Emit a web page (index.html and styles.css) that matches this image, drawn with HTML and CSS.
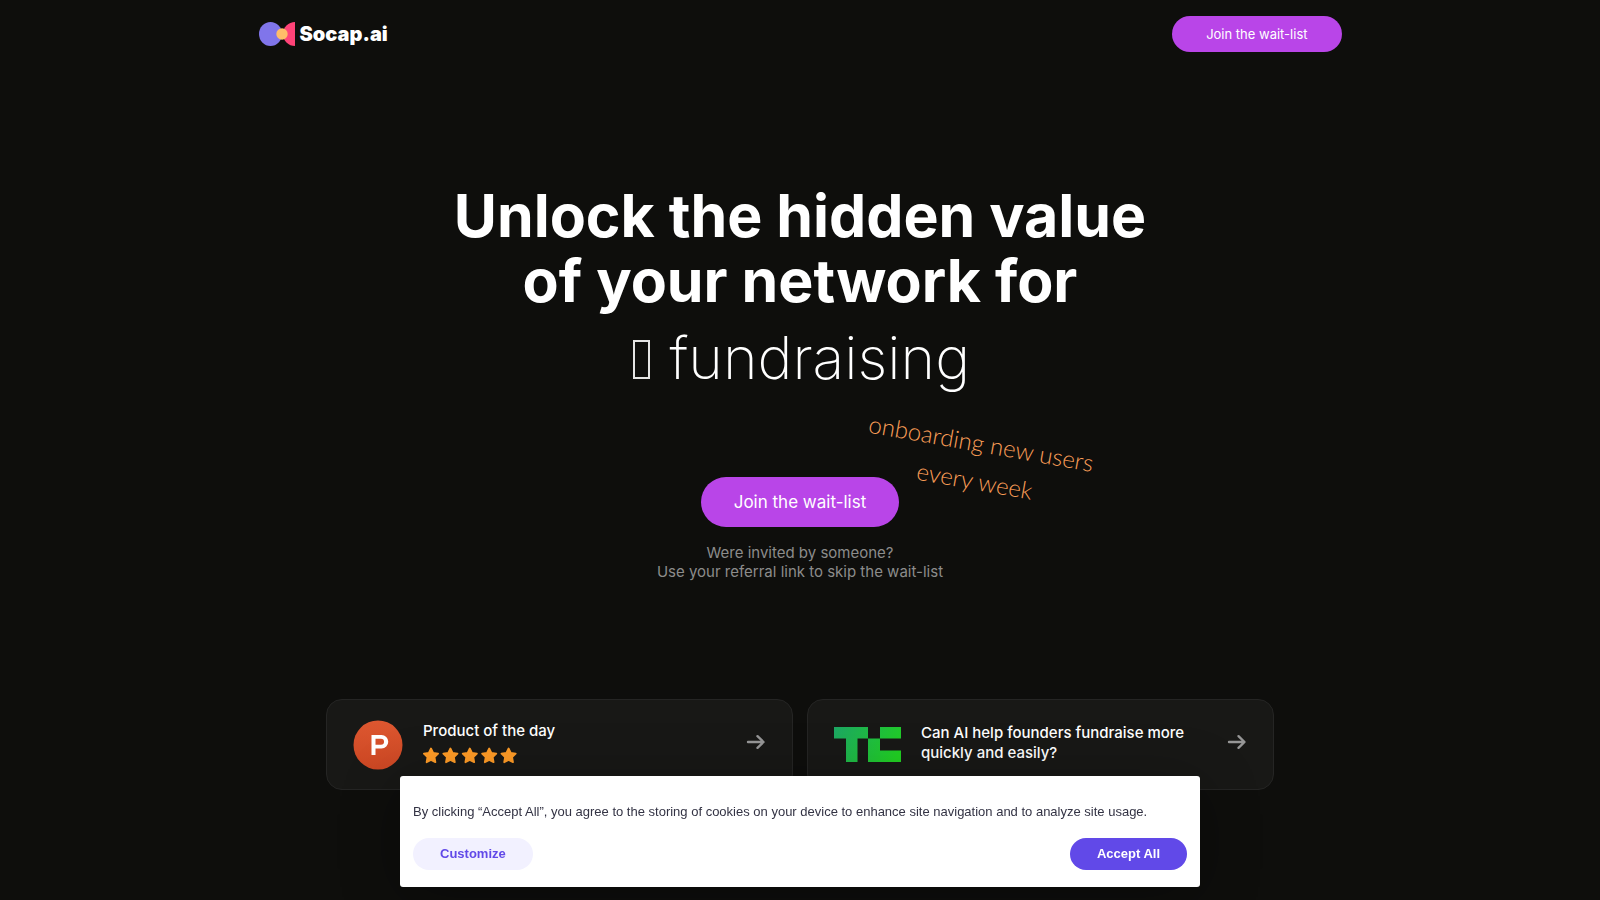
FILE: index.html
```html
<!DOCTYPE html>
<html lang="en">
<head>
<meta charset="utf-8">
<title>Socap.ai</title>
<link rel="stylesheet" href="styles.css">
</head>
<body>
<header class="nav">
  <a class="brand" href="#">
    <svg class="brand-mark" viewBox="0 0 36 24" aria-hidden="true">
      <ellipse cx="11.5" cy="12" rx="11.5" ry="12" fill="#8075ea"/>
      <path d="M36 0A12 12 0 0 0 36 24Z" fill="#ff4378"/>
      <circle cx="23" cy="12" r="5.7" fill="#ffbd69"/>
    </svg>
    <span>Socap.ai</span>
  </a>
  <a class="btn btn-small" href="#">Join the wait-list</a>
</header>
<main>
  <section class="hero">
    <h1 class="title">Unlock the hidden value<br>of your network for</h1>
    <p class="rotator"><span class="missing-glyph"></span> fundraising</p>
    <div class="action">
      <a class="btn btn-large" href="#">Join the wait-list</a>
      <p class="scribble">onboarding new users<br>every week</p>
    </div>
    <p class="hint">Were invited by someone?<br>Use your referral link to skip the wait-list</p>
  </section>
  <section class="cards">
    <a class="card" href="#">
      <svg class="ph-logo" viewBox="0 0 50 50" aria-hidden="true">
        <defs><linearGradient id="ph" x1="0" y1="0" x2="0" y2="1"><stop offset="0" stop-color="#dd5730"/><stop offset="1" stop-color="#cc4723"/></linearGradient></defs>
        <circle cx="25" cy="25" r="24.5" fill="url(#ph)"/>
        <path fill="#fff" fill-rule="evenodd" d="M18.500 15H28.500A6.600 6.600 0 0 1 28.500 28.500H22.500V35H18.500ZM22.500 18.700V24.800H28A3.050 3.050 0 0 0 28 18.700Z"/>
      </svg>
      <span class="card-body">
        <span>Product of the day</span>
        <svg class="stars" viewBox="0 0 96 18" aria-hidden="true">
          <defs><path id="star" d="M8 1.500L10.200 6L15.100 6.700L11.500 10.200L12.400 15.200L8 12.900L3.600 15.200L4.500 10.200L0.900 6.700L5.800 6Z" fill="#ff9c27" stroke="#ff9c27" stroke-width="1.800" stroke-linejoin="round"/></defs>
          <use href="#star"/><use href="#star" x="19.400"/><use href="#star" x="38.800"/><use href="#star" x="58.200"/><use href="#star" x="77.600"/>
        </svg>
      </span>
      <svg class="arrow" viewBox="0 0 20 16" aria-hidden="true"><path d="M2 8H17M11.500 2.200L17.500 8L11.500 13.800"/></svg>
    </a>
    <a class="card" href="#">
      <svg class="tc-logo" viewBox="0 0 67 35" aria-hidden="true">
        <defs><linearGradient id="tc" gradientUnits="userSpaceOnUse" x1="0" y1="0" x2="60" y2="35"><stop offset="0" stop-color="#1da764"/><stop offset="1" stop-color="#21d022"/></linearGradient></defs>
        <path fill="url(#tc)" d="M0 0H34V11.500H23.500V35H12V11.500H0ZM46 0H67V11.500H46ZM34 11.500H46V23.500H67V35H34Z"/>
      </svg>
      <span class="card-body">Can AI help founders fundraise more quickly and easily?</span>
      <svg class="arrow" viewBox="0 0 20 16" aria-hidden="true"><path d="M2 8H17M11.500 2.200L17.500 8L11.500 13.800"/></svg>
    </a>
  </section>
</main>
<aside class="cookies" aria-label="Cookie consent">
  <p class="cookies-text">By clicking “Accept All”, you agree to the storing of cookies on your device to enhance site navigation and to analyze site usage.</p>
  <div class="cookies-actions">
    <button class="pill pill-light" type="button">Customize</button>
    <button class="pill pill-solid" type="button">Accept All</button>
  </div>
</aside>
</body>
</html>
```
FILE: styles.css
```css
* { box-sizing: border-box; }
body {
  margin: 0;
  min-height: 100vh;
  overflow: hidden;
  background: #0e0e0c;
  color: #fff;
  font-family: Inter, "Liberation Sans", sans-serif;
}
p, h1 { margin: 0; }
a { color: inherit; text-decoration: none; }
.nav {
  display: flex;
  justify-content: space-between;
  align-items: center;
  max-width: 1083px;
  margin: 0 auto;
  padding: 16px 0;
}
.brand {
  display: flex;
  align-items: center;
  gap: 5px;
  font-size: 20px;
  font-weight: 900;
  line-height: 24px;
}
.brand-mark { width: 36px; height: 24px; }
.btn {
  display: inline-block;
  background: #b945e8;
  color: #fff;
  border-radius: 25px;
}
.btn-small { padding: 0 34px; font-size: 13px; line-height: 36px; }
.btn-large { padding: 0 33px; font-size: 17px; line-height: 50px; }
.hero {
  display: flex;
  flex-direction: column;
  align-items: center;
  padding-top: 115px;
  text-align: center;
}
.title { font-size: 59px; font-weight: 700; line-height: 65px; }
.rotator { margin-top: 9px; font-size: 59px; font-weight: 200; line-height: 72px; }
.missing-glyph {
  display: inline-block;
  width: 17px;
  height: 39px;
  margin: 0 3px;
  border: 2px solid #e4e4e4;
}
.action { position: relative; margin-top: 83px; }
.scribble {
  position: absolute;
  left: 162px;
  top: -53px;
  width: 230px;
  transform: rotate(10deg);
  color: #f99d57;
  font-family: Lato, sans-serif;
  font-size: 24px;
  font-weight: 300;
  line-height: 38px;
  white-space: nowrap;
}
.hint { margin-top: 16px; color: #8c8c8b; font-size: 15px; line-height: 19px; }
.cards {
  display: grid;
  grid-template-columns: 1fr 1fr;
  gap: 14px;
  max-width: 948px;
  margin: 118px auto 0;
}
.card {
  display: flex;
  align-items: center;
  gap: 20px;
  min-height: 91px;
  padding: 0 26px;
  border: 1px solid #252524;
  border-radius: 16px;
  background: #181816;
  font-size: 15px;
  font-weight: 500;
  line-height: 20px;
}
.ph-logo { flex: none; width: 50px; height: 50px; }
.tc-logo { flex: none; width: 67px; height: 35px; }
.card-body { display: flex; flex: 1; flex-direction: column; gap: 6px; padding-bottom: 3px; }
.stars { width: 96px; height: 18px; }
.arrow {
  flex: none;
  width: 20px;
  height: 16px;
  margin-bottom: 5px;
  fill: none;
  stroke: #969696;
  stroke-width: 2.4;
  stroke-linecap: round;
  stroke-linejoin: round;
}
.cookies {
  position: fixed;
  left: 25%;
  right: 25%;
  bottom: 13px;
  padding: 26px 13px 17px;
  border-radius: 3px;
  background: #fff;
  color: #333344;
  font-family: "Liberation Sans", Arial, sans-serif;
  box-shadow: 0 10px 60px rgba(0, 0, 0, .3);
}
.cookies-text { font-size: 13px; line-height: 20px; }
.cookies-actions { display: flex; justify-content: space-between; margin-top: 16px; }
.pill {
  border: 0;
  border-radius: 16px;
  padding: 0 27px;
  font: bold 13px/32px "Liberation Sans", Arial, sans-serif;
}
.pill-light { background: #f2f1ff; color: #6149e8; }
.pill-solid { background: #6149e8; color: #fff; }
```
